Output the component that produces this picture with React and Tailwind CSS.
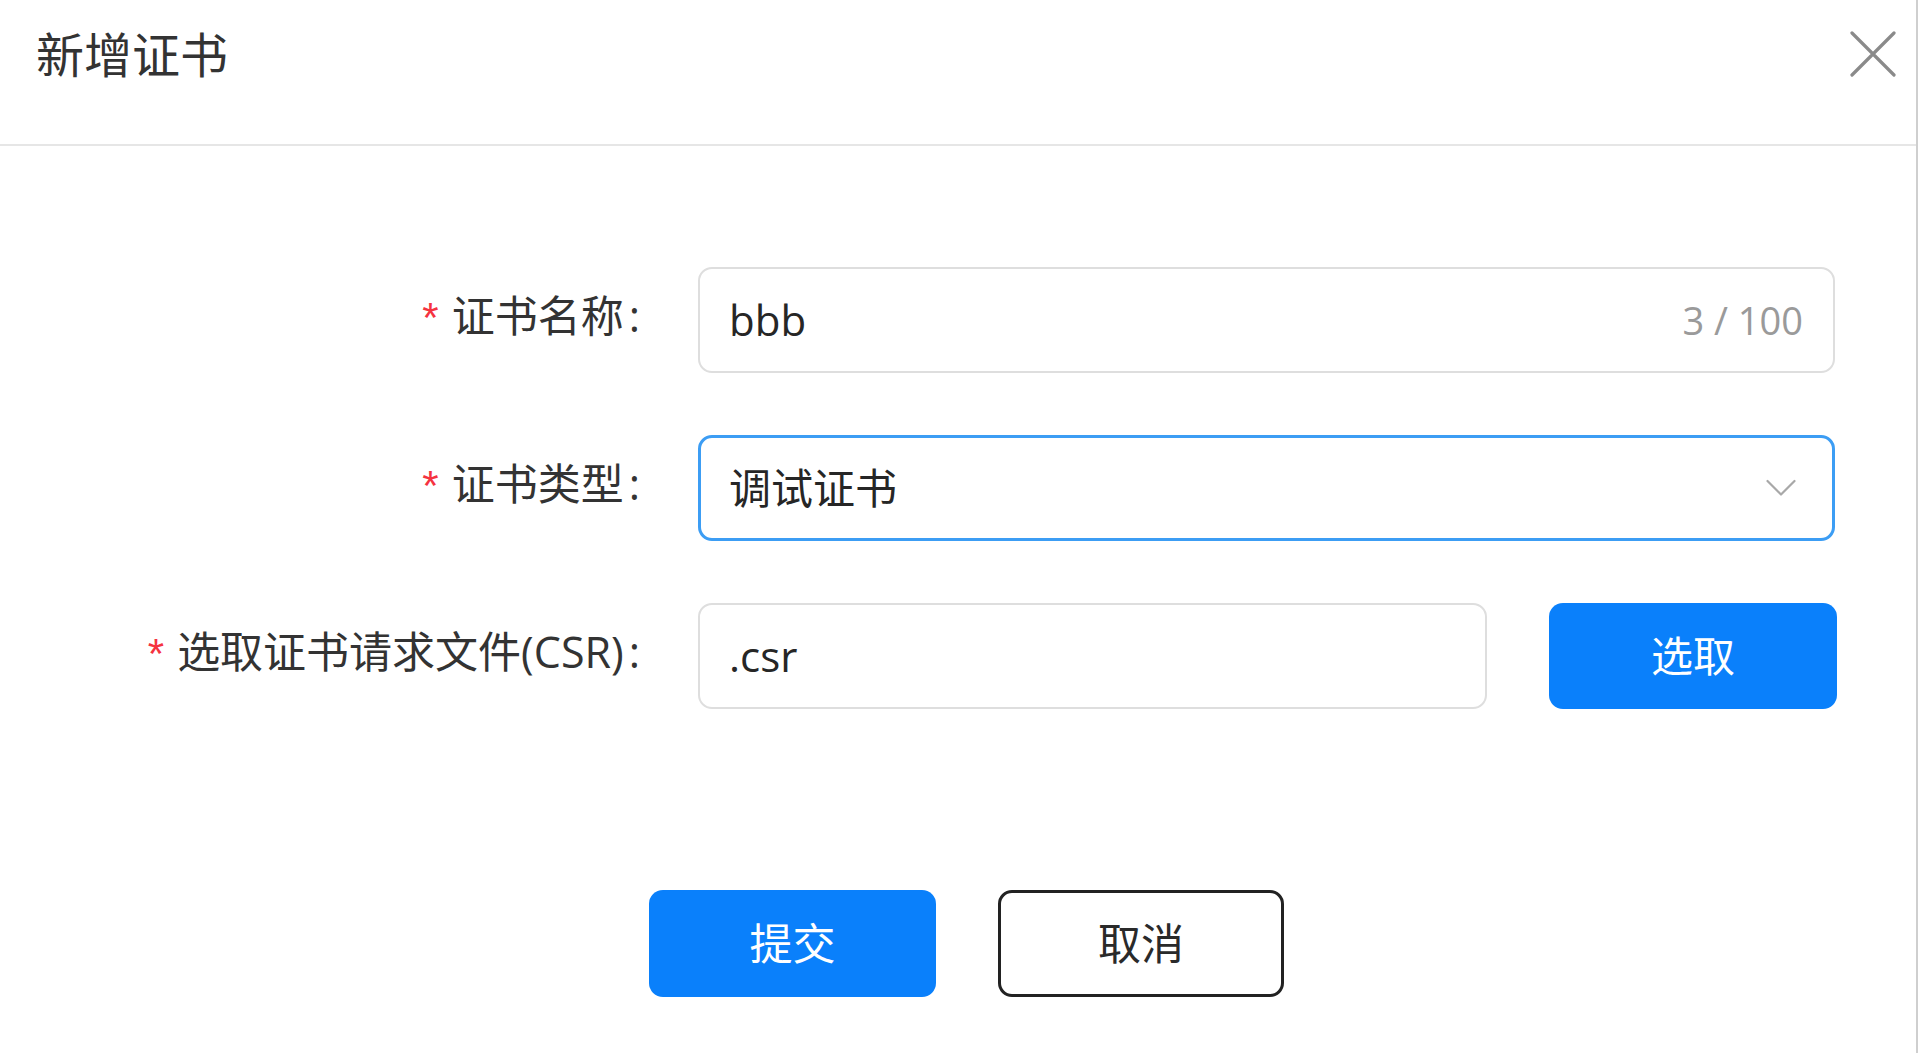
import React from "react";

function Label({ children }) {
  return (
    <div className="w-[640px] flex justify-end items-center text-[43px] leading-none text-[#333333] relative top-[-5px]">
      <span className="text-[#f5333f] text-[42px] mr-[13px] font-['Liberation_Sans',sans-serif] relative top-[3px]">*</span>
      <span>{children}</span>
      <span className="ml-[5px]">:</span>
    </div>
  );
}

export default function App() {
  return (
    <div className="w-[1918px] h-[1053px] bg-white font-['Open_Sans','Noto_Sans_CJK_SC',sans-serif] flex flex-col border-r-[2px] border-[#cfcfcf] overflow-hidden">
      <div className="h-[146px] border-b-[2px] border-[#e6e6e6] flex items-start justify-between pl-[36px] pr-[20px] pt-[31px]">
        <div className="text-[48px] leading-[48px] text-[#333333]">新增证书</div>
        <svg width="46" height="46" viewBox="0 0 46 46">
          <path d="M2 2 L44 44 M44 2 L2 44" stroke="#8a8a8a" strokeWidth="3.2" strokeLinecap="round" />
        </svg>
      </div>

      <div className="flex flex-col gap-[62px] pt-[121px]">
        <div className="flex items-center">
          <Label>证书名称</Label>
          <div className="ml-[58px] w-[1137px] h-[106px] border-[2px] border-[#dedede] rounded-[14px] flex items-center justify-between pl-[29px] pr-[30px]">
            <span className="text-[42px] leading-none text-[#262626]">bbb</span>
            <span className="text-[38px] leading-none text-[#9a9a9a]">3 / 100</span>
          </div>
        </div>

        <div className="flex items-center">
          <Label>证书类型</Label>
          <div className="ml-[58px] w-[1137px] h-[106px] border-[3px] border-[#3c9df4] rounded-[14px] flex items-center justify-between pl-[28px] pr-[36px]">
            <span className="text-[42px] leading-none text-[#262626]">调试证书</span>
            <svg width="30" height="18" viewBox="0 0 30 18">
              <path d="M1.5 2 L15 15.5 L28.5 2" fill="none" stroke="#a8a8a8" strokeWidth="2.2" strokeLinecap="round" strokeLinejoin="round" />
            </svg>
          </div>
        </div>

        <div className="flex items-center">
          <Label>选取证书请求文件(CSR)</Label>
          <div className="ml-[58px] w-[789px] h-[106px] border-[2px] border-[#dedede] rounded-[14px] flex items-center pl-[29px]">
            <span className="text-[42px] leading-none text-[#262626]">.csr</span>
          </div>
          <button className="ml-[62px] w-[288px] h-[106px] rounded-[14px] bg-[#0a80fb] text-white text-[42px] leading-none flex items-center justify-center">
            选取
          </button>
        </div>
      </div>

      <div className="flex pl-[649px] pt-[181px] gap-[62px]">
        <button className="w-[287px] h-[107px] rounded-[14px] bg-[#0a80fb] text-white text-[43px] leading-none flex items-center justify-center">
          提交
        </button>
        <button className="w-[286px] h-[107px] rounded-[14px] border-[3px] border-[#222222] bg-white text-[#2a2a2a] text-[43px] leading-none flex items-center justify-center">
          取消
        </button>
      </div>
    </div>
  );
}
